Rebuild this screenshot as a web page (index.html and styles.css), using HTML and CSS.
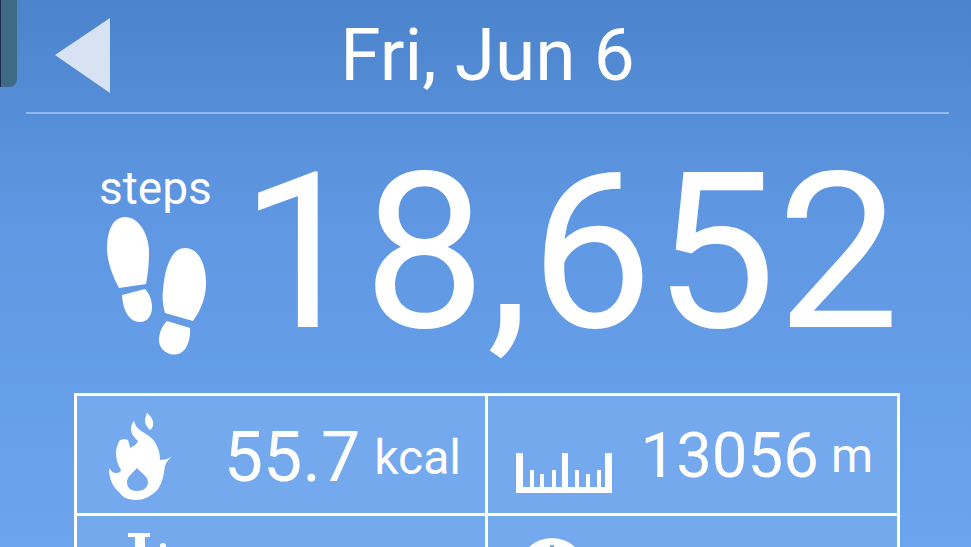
FILE: index.html
```html
<!DOCTYPE html>
<html lang="en">
<head>
    <meta charset="UTF-8">
    <meta name="viewport" content="width=device-width, initial-scale=1.0">
    <title>Steps</title>
    <link rel="stylesheet" href="styles.css">
</head>
<body>
    <div class="screen">
        <div class="side-tab"></div>
        <div class="header">
            <svg class="back" viewBox="0 0 56 76" width="56" height="76"><polygon points="0,37 55,0 55,75"/></svg>
            <h1>Fri, Jun 6</h1>
        </div>

        <div class="summary">
            <div class="steps-label">
                <p>steps</p>
                <svg class="feet" viewBox="0 0 100 138" width="100" height="138">
                    <path d="M18 0C6 0 0 14 0 31c0 14 6 29 12 40l27-4c2-10 3-21 3-31C42 16 31 0 18 0z"/>
                    <path d="M15 78l23-6c4 4 7 11 7 18 0 9-5 15-12 15-10 0-17-10-18-27z"/>
                    <path d="M78 31c-13 0-20 18-22 42-1 9 0 16 2 23l28 8c8-11 13-24 13-38 0-20-8-35-21-35z"/>
                    <path d="M60 104l23 7c1 10-3 21-8 24-4 3-9 3-12 2-7-2-11-8-11-14 0-7 3-14 8-19z"/>
                </svg>
            </div>
            <div class="steps-count">18,652</div>
        </div>

        <div class="stats">
            <div class="stat stat-cal">
                <svg class="flame" viewBox="0 0 64 88" width="64" height="88">
                    <path d="M38 0c5 4 7 9 6 13-1 2-2 4-3 4-3-3-5-6-5-9 0-3 1-5 2-8z"/>
                    <path fill-rule="evenodd" d="M25 8c1 4 3 7 7 10 7 4 13 8 15 13 3 5 4 11 4 16 4 0 8-1 12-4-3 3-6 6-7 10-1 9-3 17-7 23-5 6-13 11-22 11-7 0-13-2-17-8C3 73 0 65 0 55c2 3 4 5 7 5 3 0 5-1 5-3-3-5-5-10-5-17 0-5 2-10 4-13 3-1 6-1 8 0 1 3 2 6 2 8 4-2 7-4 8-7-4-4-7-7-7-12 0-3 1-6 3-8zM28 55c-4 5-10 8-10 14 0 6 4 9 10 9s11-3 11-9c0-6-7-9-11-14z"/>
                </svg>
                <div class="stat-value"><span class="num num-large">55.7</span><span class="unit">kcal</span></div>
            </div>
            <div class="stat stat-dist">
                <svg class="ruler" viewBox="0 0 96 40" width="96" height="40">
                    <path d="M0 0h7v34h7V17h4v17h6V21h4v13h8V17h4v17h6V0h6v34h7V17h4v17h7V21h4v13h7V17h4v17h4V0h7v40H0z"/>
                </svg>
                <div class="stat-value"><span class="num">13056</span><span class="unit">m</span></div>
            </div>
            <div class="stat">
                <svg class="timer" viewBox="0 0 60 20" width="60" height="20">
                    <path d="M19 0h22v4h-5v12H26V4h-7z"/>
                    <circle cx="54" cy="13" r="3"/>
                </svg>
            </div>
            <div class="stat stat-dist">
                <svg class="gauge" viewBox="0 0 80 40" width="80" height="40">
                    <path fill-rule="evenodd" d="M6 36a34 34 0 0 1 68 0a34 34 0 0 1-68 0zM38 9h4v4h-4z"/>
                </svg>
            </div>
        </div>
    </div>
</body>
</html>
```

FILE: styles.css
```css
html, body {
    margin: 0;
    padding: 0;
}
body {
    font-family: Roboto, "Liberation Sans", sans-serif;
    color: white;
    overflow: hidden;
}
.screen {
    position: relative;
    width: 971px;
    height: 547px;
    overflow: hidden;
    background: linear-gradient(#4b84cc, #5f97e2 40%, #6ca5ee);
}
.side-tab {
    position: absolute;
    top: 0;
    left: 0;
    width: 17px;
    height: 87px;
    background-color: #3d6a85;
    border-left: 1px solid #1b2a4a;
    border-bottom-right-radius: 8px;
    box-sizing: border-box;
}
.header {
    display: flex;
    align-items: center;
    justify-content: center;
    position: relative;
    height: 112px;
    margin: 0 22px 0 26px;
    border-bottom: 2px solid #8fb9ef;
}
.header h1 {
    margin: 0 0 2px 0;
    font-size: 73px;
    font-weight: 400;
    line-height: 80px;
}
.back {
    position: absolute;
    left: 29px;
    top: 18px;
    fill: #d7e3f3;
}
.summary {
    display: flex;
    align-items: flex-start;
    height: 279px;
    padding-left: 99px;
    box-sizing: border-box;
}
.steps-label {
    width: 150px;
    padding-top: 50px;
}
.steps-label p {
    margin: 0;
    font-size: 46px;
    line-height: 48px;
}
.feet {
    display: block;
    margin: 5px 0 0 8px;
    fill: white;
}
.steps-count {
    font-size: 218px;
    line-height: 260px;
    letter-spacing: 0.8px;
    margin: 9px 0 0 -9px;
}
.stats {
    display: grid;
    grid-template-columns: 411px 412px;
    grid-auto-rows: 120px;
    width: 826px;
    box-sizing: border-box;
    margin-left: 74px;
    background-color: #74a9ee;
    border-top: 3px solid white;
    border-left: 3px solid white;
}
.stat {
    display: flex;
    align-items: center;
    justify-content: space-between;
    border-right: 3px solid white;
    border-bottom: 3px solid white;
    box-sizing: border-box;
    padding: 2px 24px 0 32px;
}
.stat svg {
    fill: white;
}
.stat-dist {
    padding-left: 28px;
}
.stat-value {
    display: flex;
    align-items: center;
    gap: 12px;
}
.stat-cal .stat-value {
    gap: 14px;
    margin-top: 3px;
}
.flame {
    margin-top: 2px;
}
.num {
    font-size: 63.5px;
}
.num-large {
    font-size: 70px;
}
.unit {
    font-size: 48px;
}
.ruler {
    align-self: flex-start;
    margin-top: 55px;
}
.timer {
    align-self: flex-start;
    margin: 15px 0 0 0;
}
.gauge {
    align-self: flex-start;
    margin: 18px 0 0 -4px;
}
```
